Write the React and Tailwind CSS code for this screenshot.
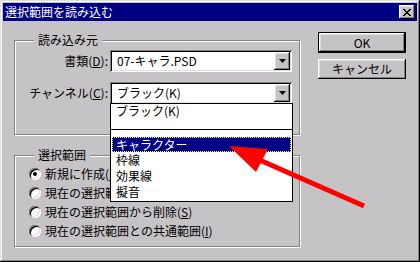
import React from "react";

const raised =
  "shadow-[inset_-1px_-1px_#000,inset_1px_1px_#fff,inset_-2px_-2px_#848284,inset_2px_2px_#dedfde]";
const sunken =
  "shadow-[inset_1px_1px_#848284,inset_-1px_-1px_#fff,inset_2px_2px_#000,inset_-2px_-2px_#dedfde]";
const etched = "border border-[#848284] shadow-[inset_1px_1px_#fff,1px_1px_#fff]";

const DropButton = () => (
  <div className={`flex h-[18px] w-[16px] items-center justify-center bg-[#c6c3c6] ${raised}`}>
    <svg width="7" height="4" viewBox="0 0 7 4">
      <path d="M0 0h7L3.5 4z" fill="#000" />
    </svg>
  </div>
);

const Combo = ({ children }) => (
  <div className={`ml-[2px] flex h-[22px] w-[182px] items-center bg-white p-[2px] ${sunken}`}>
    <div className="flex-1 pl-[5px] whitespace-nowrap">{children}</div>
    <DropButton />
  </div>
);

const Radio = ({ checked, children }) => (
  <div className="flex h-[19px] items-center pl-[14px] whitespace-nowrap">
    <div
      className={`flex h-[12px] w-[12px] items-center justify-center rounded-full bg-white ${sunken}`}
    >
      {checked && <div className="h-[4px] w-[4px] rounded-full bg-black" />}
    </div>
    <span className="ml-[4px]">{children}</span>
  </div>
);

const GroupLabel = ({ children }) => (
  <div className="-mt-[8px] ml-[19px] h-[14px] w-fit bg-[#c6c3c6] px-[4px]">{children}</div>
);

export default function App() {
  return (
    <div className="relative h-[262px] w-[420px] overflow-hidden bg-[#c6c3c6] p-[3px] font-['Noto_Sans_CJK_JP',sans-serif] text-[12px] leading-[14px] text-black shadow-[inset_-1px_-1px_#000,inset_1px_1px_#dedfde,inset_-2px_-2px_#848284,inset_2px_2px_#fff]">
      {/* title bar */}
      <div className="flex h-[18px] items-center justify-between bg-[#000084] px-[2px] text-white">
        <span>選択範囲を読み込む</span>
        <div className={`flex h-[14px] w-[16px] items-center justify-center bg-[#c6c3c6] ${raised}`}>
          <svg width="8" height="7" viewBox="0 0 8 7" shapeRendering="crispEdges">
            <path d="M0 0h2v1h1v1h2V1h1V0h2v1H7v1H6v1H5v1h1v1h1v1h1v1H6V6H5V5H3v1H2v1H0V6h1V5h1V4h1V3H2V2H1V1H0z" fill="#000" />
          </svg>
        </div>
      </div>

      <div className="flex pl-[11px]">
        {/* left column */}
        <div className="pt-[19px]">
          <div className={`h-[95px] w-[286px] ${etched}`}>
            <GroupLabel>読み込み元</GroupLabel>
            <div className="mt-[3px] flex items-center">
              <div className="w-[93px] text-right">
                書類(<u>D</u>):
              </div>
              <Combo>07-キャラ.PSD</Combo>
            </div>
            <div className="mt-[10px] flex items-center">
              <div className="w-[93px] text-right">
                チャンネル(<u>C</u>):
              </div>
              <Combo>ブラック(K)</Combo>
            </div>
          </div>

          <div className={`mt-[20px] h-[92px] w-[286px] ${etched}`}>
            <GroupLabel>選択範囲</GroupLabel>
            <div className="mt-[2px]">
              <Radio checked>
                新規に作成(<u>N</u>)
              </Radio>
              <Radio>
                現在の選択範囲に追加(<u>A</u>)
              </Radio>
              <Radio>
                現在の選択範囲から削除(<u>S</u>)
              </Radio>
              <Radio>
                現在の選択範囲との共通範囲(<u>I</u>)
              </Radio>
            </div>
          </div>
        </div>

        {/* buttons */}
        <div className="ml-[18px] pt-[11px]">
          <div className="h-[21px] w-[88px] border border-black">
            <div className={`flex h-full items-center justify-center bg-[#c6c3c6] ${raised}`}>OK</div>
          </div>
          <div
            className={`mt-[6px] flex h-[20px] w-[88px] items-center justify-center bg-[#c6c3c6] ${raised}`}
          >
            キャンセル
          </div>
        </div>
      </div>

      {/* open drop-down list */}
      <div className="absolute left-[110px] top-[103px] h-[99px] w-[183px] overflow-hidden border border-black bg-white">
        <div className="h-[26px] border-b border-black pl-[5px]">ブラック(K)</div>
        <div className="mx-[1px] mt-[7px] flex h-[15px] items-center border border-dotted border-[#ffff84] bg-[#000084] pl-[3px] text-white">
          キャラクター
        </div>
        <div className="flex h-[16px] items-center pl-[5px]">枠線</div>
        <div className="flex h-[16px] items-center pl-[5px]">効果線</div>
        <div className="flex h-[16px] items-center pl-[5px]">擬音</div>
      </div>

      {/* red arrow */}
      <svg className="pointer-events-none absolute left-0 top-0" width="420" height="262" viewBox="0 0 420 262">
        <line x1="255" y1="158" x2="364" y2="206" stroke="#ff0000" strokeWidth="5" />
        <polygon points="229,146 268,149 256,172" fill="#ff0000" />
      </svg>
    </div>
  );
}
